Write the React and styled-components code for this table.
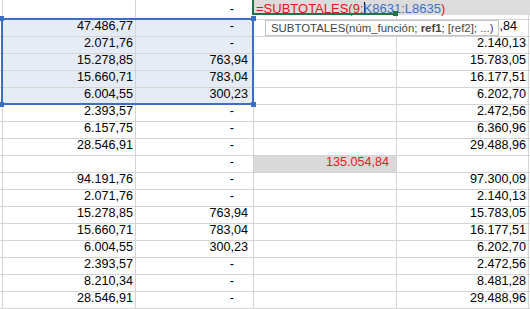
import React from "react"
import styled, { createGlobalStyle } from "styled-components"

const GlobalStyle = createGlobalStyle`
  html, body {
    margin: 0;
    padding: 0;
    background: #fff;
  }
  body {
    font-family: "Liberation Sans", Arial, sans-serif;
    overflow: hidden;
  }
`

const GRID = "#d4d4d4"
const REF_BLUE = "#3c6ec6"
const EXCEL_GREEN = "#217346"

const Sheet = styled.div`
  position: relative;
  width: 530px;
  height: 309px;
  overflow: hidden;
  background: #fff;
`

const Row = styled.div`
  display: flex;
  height: ${p => p.$h}px;
`

const Cell = styled.div`
  box-sizing: border-box;
  flex: ${p => (p.$w ? "none" : "1")};
  width: ${p => (p.$w ? `${p.$w}px` : "auto")};
  height: 100%;
  display: flex;
  align-items: flex-end;
  justify-content: flex-end;
  padding: 0 ${p => p.$pad || 2}px 2px 0;
  border-right: ${p => (p.$w ? `1px solid ${GRID}` : "none")};
  border-bottom: 1px solid ${GRID};
  background: ${p => p.$fill || "#fff"};
  color: ${p => p.$color || "#000"};
  font-size: 12.6px;
  line-height: 15px;
  white-space: nowrap;
`

const Selection = styled.div`
  position: absolute;
  left: 1px;
  top: 18px;
  width: 253px;
  height: 87px;
  box-sizing: border-box;
  border: 2px solid ${REF_BLUE};
  pointer-events: none;
`

const Handle = styled.span`
  position: absolute;
  width: 5px;
  height: 5px;
  background: ${REF_BLUE};
  ${p => (p.$right ? "right: -4px;" : "left: -4px;")}
  ${p => (p.$bottom ? "bottom: -4px;" : "top: -4px;")}
`

const EditBand = styled.div`
  position: absolute;
  left: 252px;
  top: 0;
  right: 0;
  height: 15px;
  box-sizing: border-box;
  padding: 1px 0 0 4px;
  background: #dcdcdc;
  font-size: 13px;
  line-height: 15px;
  white-space: nowrap;
  color: #e8141c;

  &::before {
    content: "";
    position: absolute;
    left: 0;
    top: 0;
    width: 145px;
    height: 15px;
    box-sizing: border-box;
    border-left: 2px solid ${EXCEL_GREEN};
    border-bottom: 2px solid ${EXCEL_GREEN};
  }

  &::after {
    content: "";
    position: absolute;
    left: 141px;
    top: 11px;
    width: 5px;
    height: 5px;
    background: ${EXCEL_GREEN};
  }
`

const Ref = styled.span`
  color: ${p => (p.$sep ? "#56627a" : "#3b72c4")};
`

const Caret = styled.span`
  display: inline-block;
  width: 1px;
  height: 13px;
  margin-right: -1px;
  background: #000;
  vertical-align: -2px;
`

const Tip = styled.div`
  position: absolute;
  left: 265px;
  top: 20px;
  width: 234px;
  height: 16px;
  box-sizing: border-box;
  padding-left: 5px;
  border: 1px solid #c4c4c4;
  background: #fff;
  color: #444;
  font-size: 11.4px;
  line-height: 15px;
  white-space: nowrap;

  b {
    font-weight: bold;
  }
`

const rows = [
  { b: "-" },
  { a: "47.486,77", b: "-", d: "49.054,84", dPad: 11, sel: true },
  { a: "2.071,76", b: "-", d: "2.140,13", sel: true },
  { a: "15.278,85", b: "763,94", d: "15.783,05", sel: true },
  { a: "15.660,71", b: "783,04", d: "16.177,51", sel: true },
  { a: "6.004,55", b: "300,23", d: "6.202,70", sel: true },
  { a: "2.393,57", b: "-", d: "2.472,56" },
  { a: "6.157,75", b: "-", d: "6.360,96" },
  { a: "28.546,91", b: "-", d: "29.488,96" },
  { b: "-", c: "135.054,84" },
  { a: "94.191,76", b: "-", d: "97.300,09" },
  { a: "2.071,76", b: "-", d: "2.140,13" },
  { a: "15.278,85", b: "763,94", d: "15.783,05" },
  { a: "15.660,71", b: "783,04", d: "16.177,51" },
  { a: "6.004,55", b: "300,23", d: "6.202,70" },
  { a: "2.393,57", b: "-", d: "2.472,56" },
  { a: "8.210,34", b: "-", d: "8.481,28" },
  { a: "28.546,91", b: "-", d: "29.488,96" },
]

const SEL_FILL = "#e6ecf6"

export default function App() {
  return (
    <>
      <GlobalStyle />
      <Sheet>
        {rows.map((r, i) => (
          <Row key={i} $h={i === 0 ? 20 : 17}>
            <Cell $w={3} />
            <Cell $w={133} $fill={r.sel ? SEL_FILL : null}>
              {r.a}
            </Cell>
            <Cell $w={118} $pad={r.b === "-" ? 19 : 5} $fill={r.sel ? SEL_FILL : null}>
              {r.b}
            </Cell>
            <Cell
              $w={143}
              $pad={7}
              $fill={r.c ? "#d9d9d9" : null}
              $color={r.c ? "#f0141c" : null}
            >
              {r.c}
            </Cell>
            <Cell $w={132} $pad={r.dPad}>
              {r.d}
            </Cell>
            <Cell />
          </Row>
        ))}

        <Selection>
          <Handle />
          <Handle $right />
          <Handle $bottom />
          <Handle $right $bottom />
        </Selection>

        <EditBand>
          =SUBTOTALES(9;<Caret />
          <Ref>K8631</Ref>
          <Ref $sep>:</Ref>
          <Ref>L8635</Ref>)
        </EditBand>

        <Tip>
          SUBTOTALES(núm_función; <b>ref1</b>; [ref2]; ...)
        </Tip>
      </Sheet>
    </>
  )
}
